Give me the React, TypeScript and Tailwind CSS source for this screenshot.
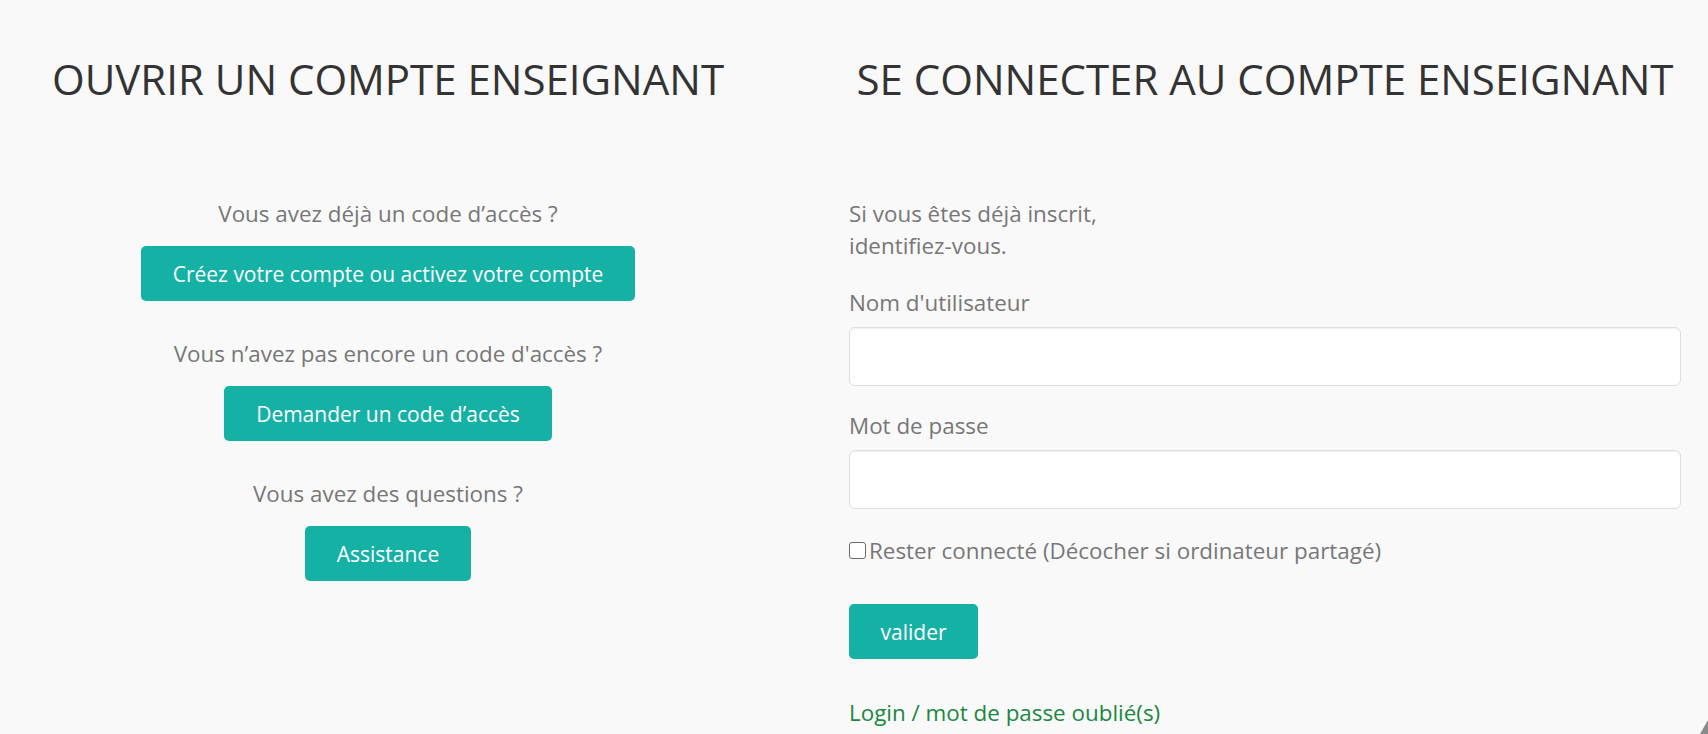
import React from "react";

const btn =
  "h-[55px] flex items-center justify-center rounded-[5px] bg-[#15b1a5] text-white text-[21px] leading-[30px] px-[32px] whitespace-nowrap";

export default function App() {
  return (
    <div className="relative min-h-[734px] h-[734px] overflow-hidden bg-[#f9f9f9] font-['Open_Sans',sans-serif]">
      <div className="flex pt-[56px]">
        {/* Left column */}
        <div className="w-[776px] flex flex-col items-center">
          <h2 className="text-[42px] leading-[46px] font-normal text-[#333] whitespace-nowrap">
            OUVRIR UN COMPTE ENSEIGNANT
          </h2>
          <div className="mt-[96px] flex flex-col items-center text-[22.4px] leading-[32px] text-[#777]">
            <p>Vous avez déjà un code d’accès ?</p>
            <button className={btn + " mt-[16px]"}>Créez votre compte ou activez votre compte</button>
            <p className="mt-[37px]">Vous n’avez pas encore un code d'accès ?</p>
            <button className={btn + " mt-[16px]"}>Demander un code d’accès</button>
            <p className="mt-[37px]">Vous avez des questions ?</p>
            <button className={btn + " mt-[16px]"}>Assistance</button>
          </div>
        </div>

        {/* Right column */}
        <div className="ml-[73px] w-[832px] flex flex-col">
          <h2 className="text-center text-[42px] leading-[46px] font-normal text-[#333] whitespace-nowrap">
            SE CONNECTER AU COMPTE ENSEIGNANT
          </h2>
          <div className="mt-[96px] flex flex-col text-[22.4px] leading-[32px] text-[#777]">
            <p>
              Si vous êtes déjà inscrit,
              <br />
              identifiez-vous.
            </p>
            <label className="mt-[25px]">Nom d'utilisateur</label>
            <input
              type="text"
              className="mt-[8px] h-[59px] w-full rounded-[6px] border border-[#dedede] bg-white shadow-[inset_0_1px_1px_rgba(0,0,0,0.06)] outline-none"
            />
            <label className="mt-[24px]">Mot de passe</label>
            <input
              type="password"
              className="mt-[8px] h-[59px] w-full rounded-[6px] border border-[#dedede] bg-white shadow-[inset_0_1px_1px_rgba(0,0,0,0.06)] outline-none"
            />
            <div className="mt-[26px] flex items-center">
              <span className="inline-block w-[17px] h-[17px] rounded-[3px] border-[1.5px] border-[#6b6b6b] bg-white mr-[3px] -mt-[1px]" />
              <span>Rester connecté (Décocher si ordinateur partagé)</span>
            </div>
            <div className="mt-[37px]">
              <button className={btn + " w-[129px] px-0"}>valider</button>
            </div>
            <a className="mt-[38px] text-[#1b873f]" href="#">
              Login / mot de passe oublié(s)
            </a>
          </div>
        </div>
      </div>

      {/* resize grip */}
      <svg className="absolute right-0 bottom-0" width="12" height="14" viewBox="0 0 12 14">
        <polygon points="12,0 12,14 4,14" fill="#8a8a8a" />
      </svg>
    </div>
  );
}
